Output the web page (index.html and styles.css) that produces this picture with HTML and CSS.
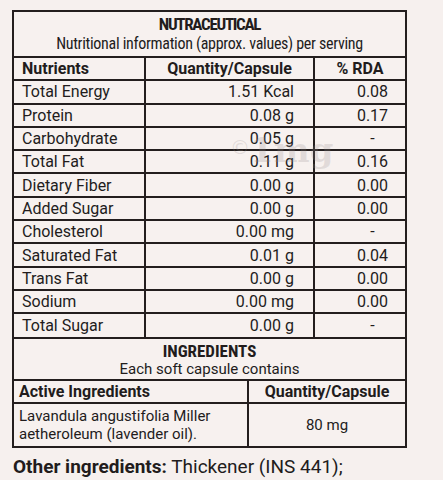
FILE: index.html
```html
<!DOCTYPE html>
<html>
<head>
<meta charset="utf-8">
<link rel="stylesheet" href="styles.css">
</head>
<body>
<div class="page">
  <div class="label">
    <div class="title">
      <div class="t1 main">NUTRACEUTICAL</div>
      <div class="t2">Nutritional information (approx. values) per serving</div>
    </div>
    <table class="nut">
      <colgroup><col class="c1"><col class="c2"><col class="c3"></colgroup>
      <tr class="head"><th class="l">Nutrients</th><th>Quantity/Capsule</th><th>% RDA</th></tr>
      <tr><td>Total Energy</td><td class="q">1.51 Kcal</td><td class="r">0.08</td></tr>
      <tr><td>Protein</td><td class="q">0.08 g</td><td class="r">0.17</td></tr>
      <tr><td>Carbohydrate</td><td class="q">0.05 g</td><td class="r dash">-</td></tr>
      <tr><td>Total Fat</td><td class="q">0.11 g</td><td class="r">0.16</td></tr>
      <tr><td>Dietary Fiber</td><td class="q">0.00 g</td><td class="r">0.00</td></tr>
      <tr><td>Added Sugar</td><td class="q">0.00 g</td><td class="r">0.00</td></tr>
      <tr><td>Cholesterol</td><td class="q">0.00 mg</td><td class="r dash">-</td></tr>
      <tr><td>Saturated Fat</td><td class="q">0.01 g</td><td class="r">0.04</td></tr>
      <tr><td>Trans Fat</td><td class="q">0.00 g</td><td class="r">0.00</td></tr>
      <tr><td>Sodium</td><td class="q">0.00 mg</td><td class="r">0.00</td></tr>
      <tr><td>Total Sugar</td><td class="q">0.00 g</td><td class="r dash">-</td></tr>
    </table>
    <div class="ing">
      <div class="t1">INGREDIENTS</div>
      <div class="t3">Each soft capsule contains</div>
    </div>
    <table class="act">
      <colgroup><col class="a1"><col class="a2"></colgroup>
      <tr class="head"><th class="l">Active Ingredients</th><th>Quantity/Capsule</th></tr>
      <tr class="lav"><td class="name">Lavandula angustifolia Miller<br>aetheroleum (lavender oil).</td><td class="amt">80 mg</td></tr>
    </table>
    <span class="wm"><span class="c">©</span>1mg</span>
  </div>
  <p class="other"><b>Other ingredients:</b> Thickener (INS 441);</p>
</div>
</body>
</html>
```

FILE: styles.css
```css
html, body {
  margin: 0;
  padding: 0;
  background: #f6f0ee;
}
.page {
  width: 443px;
  height: 480px;
  overflow: hidden;
  padding: 10px 0 0 12px;
  box-sizing: border-box;
  color: #221c1c;
  font-family: Roboto, "Liberation Sans", sans-serif;
}
.label {
  position: relative;
  width: 395px;
  box-sizing: border-box;
  border: 2px solid #241e1e;
  background: #f7f1ef;
}
.title {
  height: 44px;
  display: flex;
  flex-direction: column;
  align-items: center;
  padding-top: 3px;
  box-sizing: border-box;
}
.t1 {
  font-family: Roboto, "Liberation Sans", sans-serif;
  font-stretch: 75%;
  font-weight: bold;
  font-size: 17px;
  line-height: 18px;
}
.t1.main {
  font-size: 17px;
  letter-spacing: -1.3px;
}
.t2 {
  font-family: Roboto, "Liberation Sans", sans-serif;
  font-stretch: 75%;
  font-size: 16px;
  letter-spacing: -0.3px;
  line-height: 21px;
}
table {
  width: 100%;
  border-collapse: collapse;
  table-layout: fixed;
}
td, th {
  border-top: 2px solid #241e1e;
  padding: 0;
  font-size: 16px;
  white-space: nowrap;
}
td + td, th + th {
  border-left: 2px solid #241e1e;
}
.c1 { width: 131px; }
.c2 { width: 169px; }
.nut tr { height: 23.3px; }
th { font-weight: bold; text-align: center; }
th.l, td { text-align: left; padding-left: 8px; }
td.q { text-align: right; padding-right: 19px; padding-left: 0; }
td.r { text-align: center; padding-left: 25px; }
.ing {
  height: 42px;
  border-top: 2px solid #241e1e;
  display: flex;
  flex-direction: column;
  align-items: center;
  padding-top: 3px;
  box-sizing: border-box;
}
.t3 {
  font-size: 15px;
  line-height: 18px;
}
.a1 { width: 234px; }
.act .head { height: 23px; }
.act th.l { padding-left: 5px; }
.lav { height: 43px; }
td.name {
  font-size: 15px;
  line-height: 18px;
  padding-left: 5px;
}
td.amt {
  text-align: center;
  font-size: 15px;
  padding-left: 0;
}
.wm {
  position: absolute;
  left: 216px;
  top: 118px;
  font-family: "DejaVu Serif", serif;
  font-weight: bold;
  font-size: 34px;
  color: rgba(150, 140, 140, 0.22);
}
.wm .c { font-size: 20px; font-family: "DejaVu Sans", sans-serif; font-weight: normal; vertical-align: 8px; }
.other {
  margin: 8px 0 0 1px;
  font-size: 19px;
  line-height: 22px;
}
.other b { font-weight: bold; }
```
